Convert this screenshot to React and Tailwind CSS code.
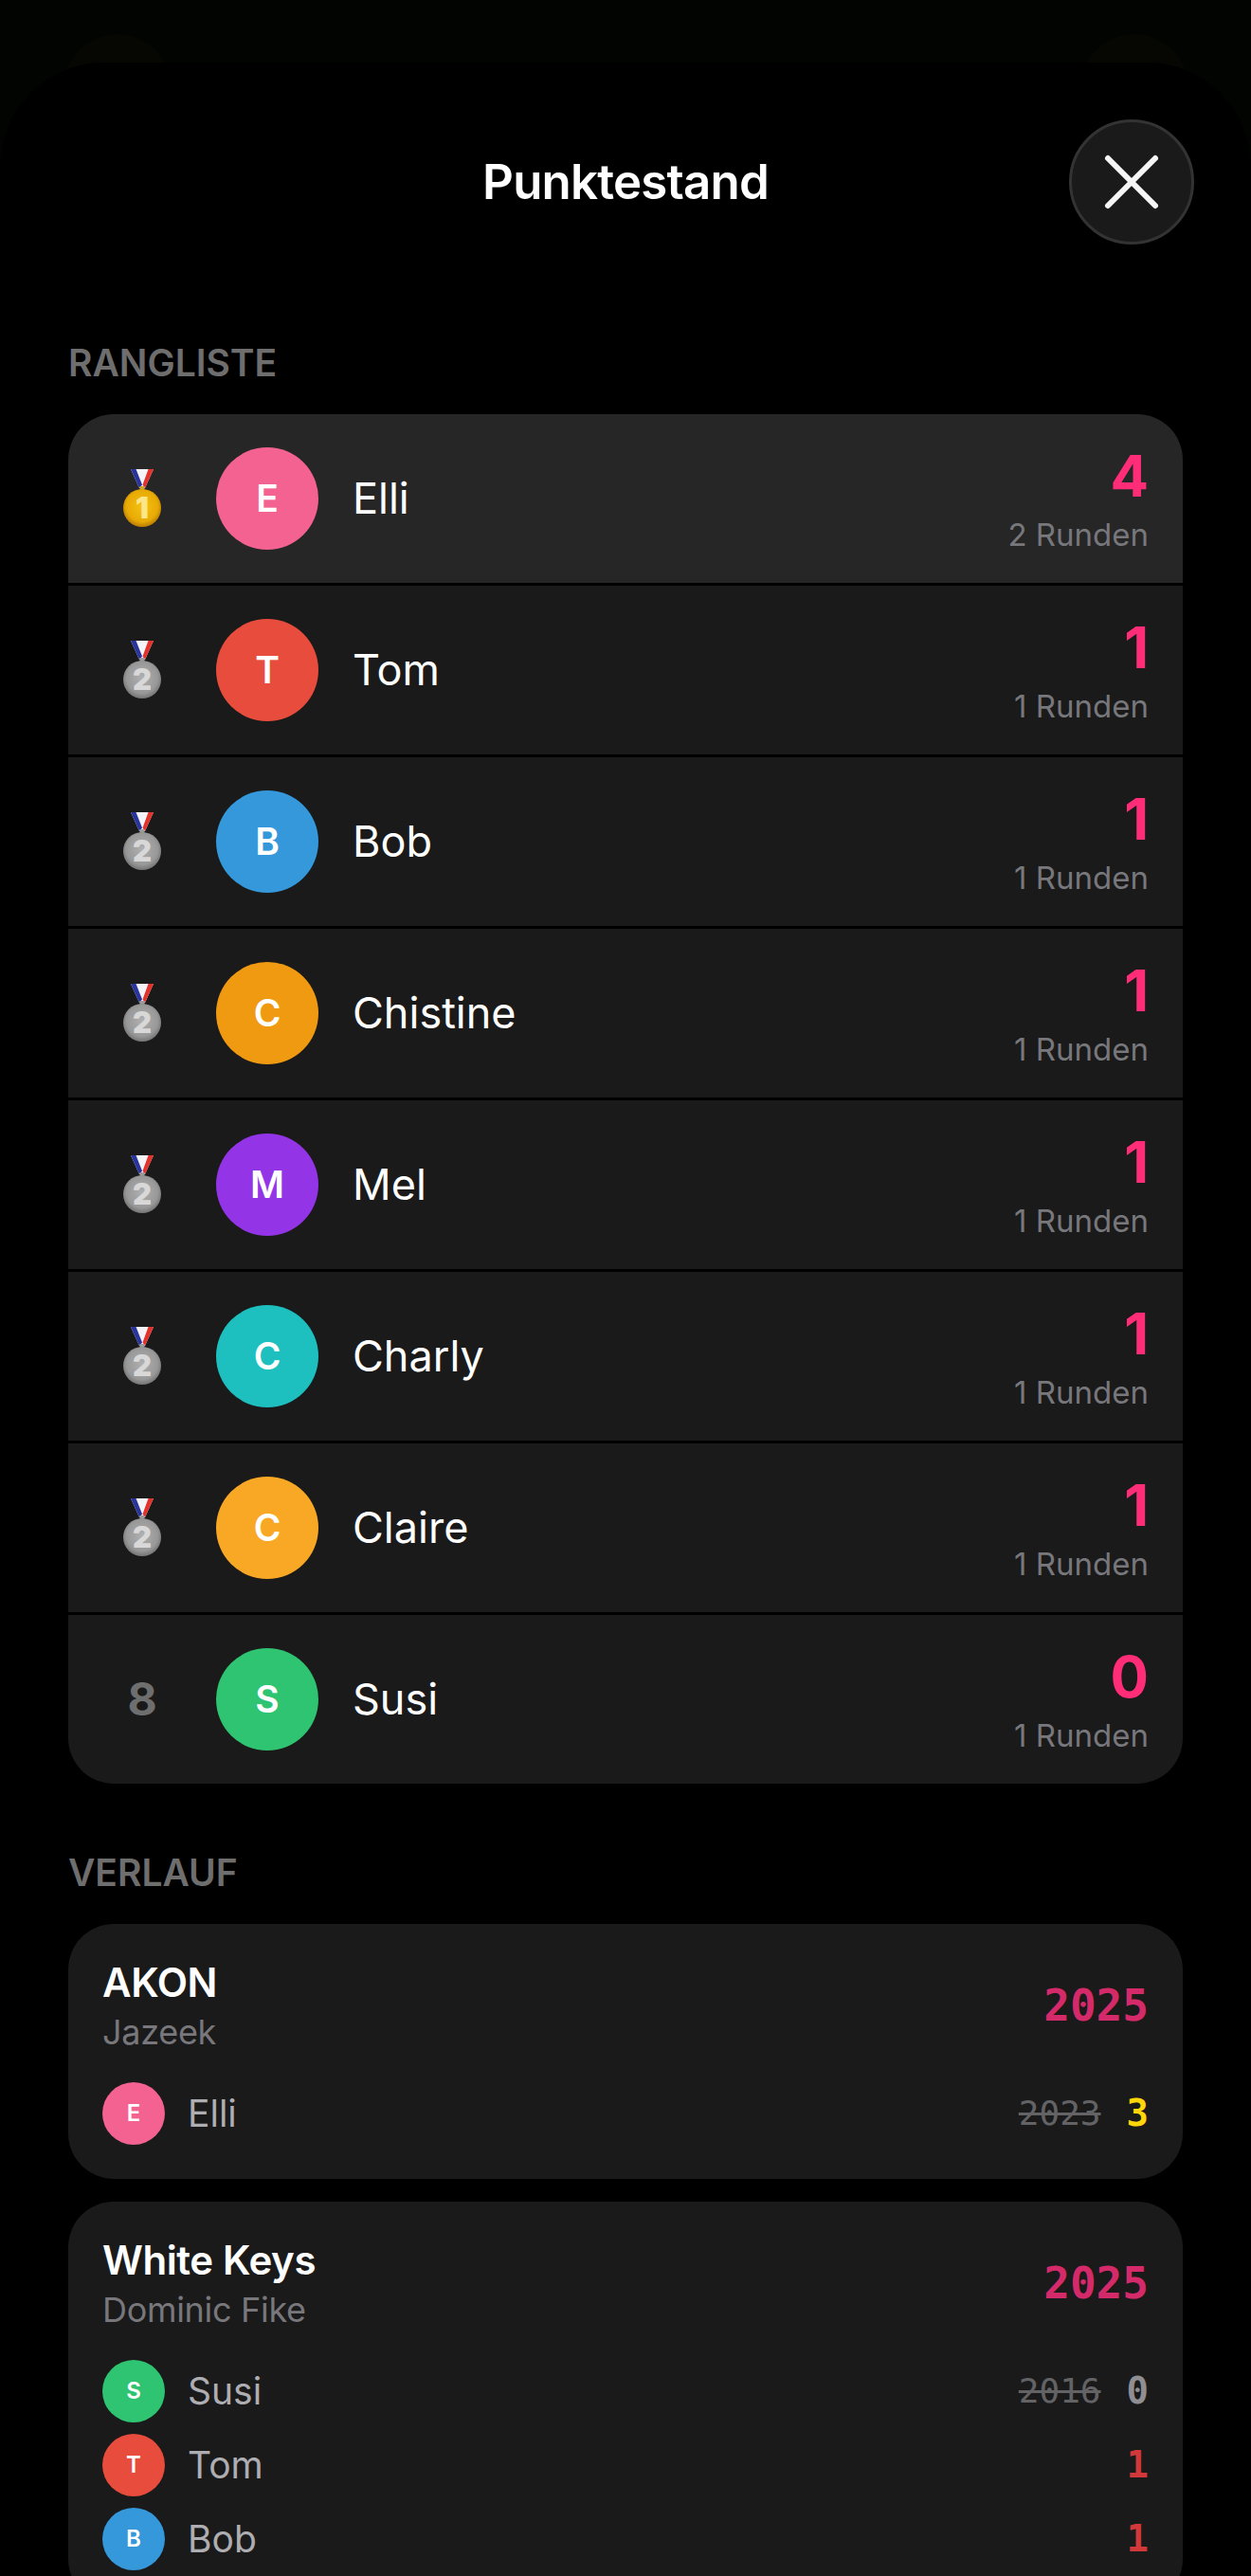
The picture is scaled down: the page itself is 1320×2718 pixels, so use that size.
import React from 'react';

const ranking = [
  { rank: 1, name: 'Elli', color: 'bg-[#f46292]', score: 4, rounds: 2 },
  { rank: 2, name: 'Tom', color: 'bg-[#e74c3c]', score: 1, rounds: 1 },
  { rank: 2, name: 'Bob', color: 'bg-[#3498db]', score: 1, rounds: 1 },
  { rank: 2, name: 'Chistine', color: 'bg-[#f09a12]', score: 1, rounds: 1 },
  { rank: 2, name: 'Mel', color: 'bg-[#9334e6]', score: 1, rounds: 1 },
  { rank: 2, name: 'Charly', color: 'bg-[#1dbfbf]', score: 1, rounds: 1 },
  { rank: 2, name: 'Claire', color: 'bg-[#f9a825]', score: 1, rounds: 1 },
  { rank: 8, name: 'Susi', color: 'bg-[#2ec471]', score: 0, rounds: 1 },
];

const history = [
  {
    title: 'AKON',
    artist: 'Jazeek',
    year: 2025,
    guesses: [{ name: 'Elli', color: 'bg-[#f46292]', guess: 2023, points: 3, tone: 'text-[#ffd60a]' }],
  },
  {
    title: 'White Keys',
    artist: 'Dominic Fike',
    year: 2025,
    guesses: [
      { name: 'Susi', color: 'bg-[#2ec471]', guess: 2016, points: 0, tone: 'text-[#8e8e93]' },
      { name: 'Tom', color: 'bg-[#e74c3c]', points: 1, tone: 'text-[#d0383a]' },
      { name: 'Bob', color: 'bg-[#3498db]', points: 1, tone: 'text-[#d0383a]' },
    ],
  },
];

const Medal = ({ place }) => {
  const gold = place === 1;
  const gradId = gold ? 'medalGold' : 'medalSilver';
  return (
    <svg width="42" height="62" viewBox="0 0 42 62">
      <defs>
        <radialGradient id={gradId} cx="50%" cy="45%" r="55%">
          <stop offset="0%" stopColor={gold ? '#f5c211' : '#b0b0b0'} />
          <stop offset="75%" stopColor={gold ? '#e8aa05' : '#989898'} />
          <stop offset="100%" stopColor={gold ? '#b87c02' : '#747474'} />
        </radialGradient>
      </defs>
      <path d="M9 0H33L24 20H18Z" fill="#f4f4f8" />
      <path d="M9 0H14.5L21 16.5L18 20Z" fill="#28349c" />
      <path d="M27.5 0H33L24 20L21.5 16.5Z" fill="#e3312b" />
      <rect x="18.5" y="18" width="5" height="4" fill={gold ? '#c9a32a' : '#9a9a9a'} />
      <circle cx="21" cy="41" r="20" fill={`url(#${gradId})`} />
      <text
        x="21"
        y="52"
        textAnchor="middle"
        fontFamily="Inter, sans-serif"
        fontWeight="900"
        fontSize="31"
        fill={gold ? '#fde68a' : '#d8d8d8'}
      >
        {place}
      </text>
    </svg>
  );
};

const App = () => {
  return (
    <div className="relative h-[2718px] overflow-hidden bg-[#020402] font-['Inter',sans-serif] text-white">
      {/* faint shapes behind the sheet */}
      <div className="absolute left-[67px] top-[36px] h-[114px] w-[114px] rounded-full bg-[#060702]" />
      <div className="absolute left-[1140px] top-[36px] h-[114px] w-[114px] rounded-full bg-[#060702]" />

      <div className="relative mt-[66px] h-[2652px] rounded-t-[110px] bg-black">
        {/* Header */}
        <div className="flex items-center px-[60px] pt-[60px]">
          <div className="w-[132px]" />
          <h1 className="flex-1 text-center text-[51px] leading-[62px] font-semibold tracking-[-0.8px]">Punktestand</h1>
          <button className="flex h-[132px] w-[132px] items-center justify-center rounded-full border-[3px] border-[#333333] bg-[#1a1a1a]">
            <svg width="60" height="60" viewBox="0 0 60 60" fill="none" stroke="#f5f5f5" strokeWidth="6" strokeLinecap="round">
              <path d="M5 5L55 55M55 5L5 55" />
            </svg>
          </button>
        </div>

        <div className="px-[72px]">
          {/* Rangliste */}
          <h2 className="mt-[101px] mb-[30px] text-[39px] leading-[48px] font-semibold text-[#6e6e6e]">RANGLISTE</h2>
          <div className="flex flex-col gap-[3px] overflow-hidden rounded-[48px]">
            {ranking.map((player, i) => (
              <div
                key={player.name}
                className={`flex h-[178px] items-center gap-9 px-9 ${i === 0 ? 'bg-[#262626]' : 'bg-[#1a1a1a]'}`}
              >
                <div className="flex w-[84px] justify-center">
                  {player.rank <= 3 ? (
                    <Medal place={player.rank} />
                  ) : (
                    <span className="text-[48px] font-bold text-[#6e6e6e]">{player.rank}</span>
                  )}
                </div>
                <div className={`flex h-[108px] w-[108px] items-center justify-center rounded-full text-[39px] font-semibold ${player.color}`}>
                  {player.name[0]}
                </div>
                <div className="flex-1 text-[45px]">{player.name}</div>
                <div className="flex flex-col items-end">
                  <span className="mb-[7px] text-[60px] leading-[68px] font-bold text-[#ff2d78]">{player.score}</span>
                  <span className="text-[33px] leading-[42px] text-[#77777c]">{player.rounds} Runden</span>
                </div>
              </div>
            ))}
          </div>

          {/* Verlauf */}
          <h2 className="mt-[70px] mb-[30px] text-[39px] leading-[48px] font-semibold text-[#6e6e6e]">VERLAUF</h2>
          <div className="flex flex-col gap-6">
            {history.map((song) => (
              <div key={song.title} className="rounded-[48px] bg-[#1a1a1a] p-9">
                <div className="flex items-center justify-between">
                  <div>
                    <div className="text-[42px] leading-[52px] font-semibold tracking-[-0.4px]">{song.title}</div>
                    <div className="mt-[3px] text-[36px] leading-[46px] tracking-[-0.3px] text-[#77777c]">{song.artist}</div>
                  </div>
                  <span className="font-['DejaVu_Sans_Mono',monospace] text-[46px] font-bold text-[#d42a6a]">{song.year}</span>
                </div>
                <div className="mt-[30px] flex flex-col gap-3">
                  {song.guesses.map((g) => (
                    <div key={g.name} className="flex h-[66px] items-center gap-6">
                      <div className={`flex h-[66px] w-[66px] items-center justify-center rounded-full text-[24px] font-semibold ${g.color}`}>
                        {g.name[0]}
                      </div>
                      <div className="flex-1 text-[39px] text-[#aeaeb2]">{g.name}</div>
                      {g.guess && (
                        <span className="mr-[3px] font-['DejaVu_Sans_Mono',monospace] text-[36px] text-[#636366] line-through">{g.guess}</span>
                      )}
                      <span className={`font-['DejaVu_Sans_Mono',monospace] text-[39px] font-bold ${g.tone}`}>{g.points}</span>
                    </div>
                  ))}
                </div>
              </div>
            ))}
          </div>
        </div>
      </div>
    </div>
  );
};

export default App;
